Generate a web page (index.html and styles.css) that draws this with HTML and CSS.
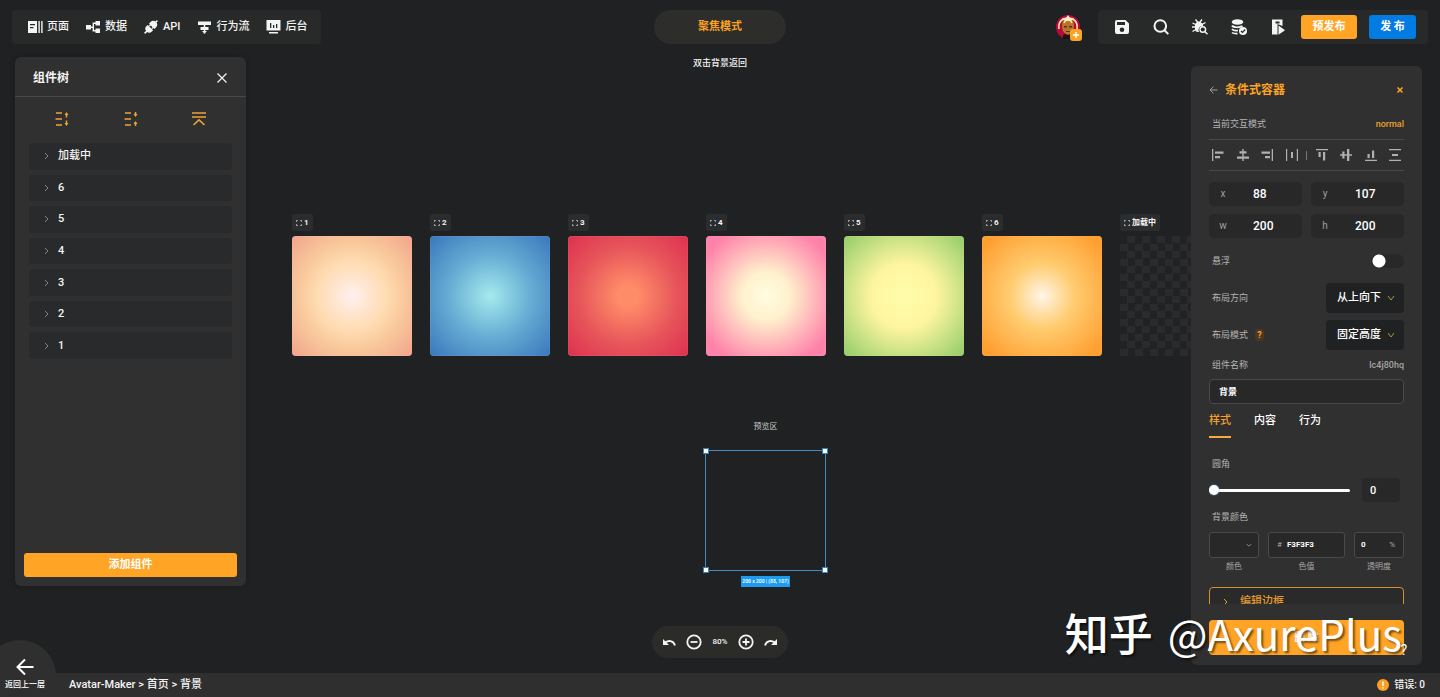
FILE: index.html
```html
<!DOCTYPE html>
<html lang="zh-CN">
<head>
<meta charset="utf-8">
<meta name="viewport" content="width=device-width, initial-scale=1">
<title>Avatar-Maker</title>
<link rel="stylesheet" href="styles.css">
</head>
<body>
<header class="topbar">
  <nav class="nav">
    <a href="#" class="nav-item"><svg class="nav-icon" viewBox="0 0 15 14"><path fill="currentColor" fill-rule="evenodd" d="M0 1h9v12H0zM2 4v1.300h5V4zM2 7v1.300h3.500V7zM10.400 1h1.400v12h-1.400zM13.200 1h1.400v12h-1.400z"/></svg>页面</a>
    <a href="#" class="nav-item"><svg class="nav-icon" viewBox="0 0 15 14"><path fill="currentColor" d="M0 5h5v4.500H0zM9.500 1H14v4.500H9.500zM9.500 8.500H14V13H9.500z"/><path fill="none" stroke="currentColor" stroke-width="1.400" d="M5 7.200h2.300M10 3.200H7.300v7.600H10"/></svg>数据</a>
    <a href="#" class="nav-item"><svg class="nav-icon" viewBox="0 0 15 14"><g fill="currentColor" transform="rotate(-45 7 7)"><path d="M6.200 3.200v7.600H4.500a3.800 3.800 0 0 1 0-7.600zM8 3.200h2.200a3.800 3.800 0 0 1 0 7.600H8V9.500H6.500V8.200H8V5.800H6.500V4.500H8z"/><path d="M-2 6.200h3.500v1.600H-2zM13 6.200h3v1.600h-3z"/></g></svg>API</a>
    <a href="#" class="nav-item"><svg class="nav-icon" viewBox="0 0 15 14"><path fill="currentColor" d="M1 1.500h13V5H1zM3.500 7h8v3h-8zM6.700 5h1.600v2H6.700zM6.700 10h1.600v3.500H6.700z"/><path fill="currentColor" d="M5 11h5l-2.500 2.500z"/></svg>行为流</a>
    <a href="#" class="nav-item"><svg class="nav-icon" viewBox="0 0 15 14"><path fill="currentColor" fill-rule="evenodd" d="M.500 0h14v10.500H.500zM4 3v5h1.300V3zM7 5v3h1.300V5zM10 4v4h1.300V4zM3 12h9v1.500H3z"/></svg>后台</a>
  </nav>
  <button class="mode">聚焦模式</button>
  <div class="top-right">
    <button class="avatar" aria-label="账户">
      <svg viewBox="0 0 24 24"><circle cx="12" cy="12" r="12" fill="#b50a3a"/><path fill="#1b1416" d="M7 24v-4l5-2 5 2v4z"/><path fill="#b87524" d="M6 10c0-5 3-7 6-7s6 2 6 7-1 8-6 10C7 18 6 15 6 10z"/><path fill="none" stroke="#f5e4b4" stroke-width="1.600" d="M3 14c-1-7 3-11 9-11s10 4 9 11M8 8c1-2 2-3 4-5 2 2 3 3 4 5"/><path fill="#f8edc9" d="m12 0 2 3h4l-3 3H9L6 3h4z"/><path fill="#5c2c17" d="M8 11h3v1.500H8zM13 11h3v1.500h-3zM10 16h4v1h-4z"/></svg>
      <span class="avatar-badge"><svg viewBox="0 0 12 12"><path stroke="#fff" stroke-width="1.600" d="M6 3v6M3 6h6"/></svg></span>
    </button>
    <div class="tools">
      <button class="tool" aria-label="保存"><svg viewBox="0 0 16 16"><path fill="currentColor" fill-rule="evenodd" d="M3 1h8.500L15 4.500V13a2 2 0 0 1-2 2H3a2 2 0 0 1-2-2V3a2 2 0 0 1 2-2zM3 3v3h8V3zM8 8.500a2.300 2.300 0 1 0 0 4.600 2.300 2.300 0 0 0 0-4.600z"/></svg></button>
      <button class="tool" aria-label="搜索"><svg viewBox="0 0 16 16"><g fill="none" stroke="currentColor" stroke-width="2"><circle cx="7.300" cy="7" r="5.800"/><path d="m11.500 11.300 3.800 3.800"/></g></svg></button>
      <button class="tool" aria-label="调试"><svg viewBox="0 0 16 16"><path fill="currentColor" d="M4.500 3.500C5 2 8.500 2 9 3.500L11 5v2a4 4 0 0 0-4 6c-2.500.500-4-1-4-3V5z"/><path stroke="currentColor" stroke-width="1.300" d="M3.500.500 5.500 3M10 .500 8 3M.500 4l3 1.500M0 8h3.500M.500 12.500 4 10.500M13.500 3.500 10 5.500"/><g fill="none" stroke="currentColor" stroke-width="1.400"><circle cx="10.800" cy="10.500" r="2.800"/><path d="m13 12.700 2.500 2.500"/></g></svg></button>
      <button class="tool" aria-label="数据库"><svg viewBox="0 0 16 16"><ellipse cx="6.500" cy="3" rx="5.800" ry="2.800" fill="currentColor"/><path fill="none" stroke="currentColor" stroke-width="1.700" d="M1 6.500c1 2 7 2.500 10.500.500M1 10c1 1.500 3 1.800 6 1.500M1 13.500c1 1 3 1.300 5.500 1.200"/><circle cx="12" cy="12" r="4" fill="currentColor"/><path fill="none" stroke="#282a2a" stroke-width="1.200" d="m10 12 1.500 1.500 2.700-3"/></svg></button>
      <button class="tool" aria-label="运行"><svg viewBox="0 0 16 16"><path fill="currentColor" fill-rule="evenodd" d="M2 .500h10.500V7L7.500 5v10.500H2zM5.500 2.500v2h4v-2z"/><path fill="currentColor" d="m8.500 6.500 6.500 4.700-6.500 4.600z"/></svg></button>
      <button class="publish publish-pre">预发布</button>
      <button class="publish publish-live">发 布</button>
    </div>
  </div>
</header>

<main class="workspace">
  <aside class="tree">
    <div class="tree-head">
      <h2 class="tree-title">组件树</h2>
      <button class="close" aria-label="关闭"><svg viewBox="0 0 12 12"><path stroke="currentColor" stroke-width="1.200" d="m1.500 1.500 9 9m0-9-9 9"/></svg></button>
    </div>
    <div class="tree-tools">
      <button class="tree-tool" aria-label="展开"><svg viewBox="0 0 16 16"><path fill="none" stroke="currentColor" stroke-width="1.500" d="M2 2h6M1.500 8H8M2 14h6M12.500 3v3.500M12.500 9.500V13"/><path fill="currentColor" d="m12.500 1 2 3h-4zM12.500 15l2-3h-4z"/></svg></button>
      <button class="tree-tool" aria-label="收起"><svg viewBox="0 0 16 16"><path fill="none" stroke="currentColor" stroke-width="1.500" d="M2 2h6M1.500 8H8M2 14h6M12.500 1v3.500M12.500 11.500V15"/><path fill="currentColor" d="m12.500 6 2-3h-4zM12.500 10l2 3h-4z"/></svg></button>
      <button class="tree-tool" aria-label="置顶"><svg viewBox="0 0 16 16"><path fill="none" stroke="currentColor" stroke-width="1.600" d="M1 2h14M1 6h14M2.500 14 8 8.800l5.500 5.200"/></svg></button>
    </div>
    <ul class="tree-list">
      <li><button class="tree-row"><svg class="chev" viewBox="0 0 6 8"><path d="m1 1 3 3-3 3"/></svg>加载中</button></li>
      <li><button class="tree-row"><svg class="chev" viewBox="0 0 6 8"><path d="m1 1 3 3-3 3"/></svg>6</button></li>
      <li><button class="tree-row"><svg class="chev" viewBox="0 0 6 8"><path d="m1 1 3 3-3 3"/></svg>5</button></li>
      <li><button class="tree-row"><svg class="chev" viewBox="0 0 6 8"><path d="m1 1 3 3-3 3"/></svg>4</button></li>
      <li><button class="tree-row"><svg class="chev" viewBox="0 0 6 8"><path d="m1 1 3 3-3 3"/></svg>3</button></li>
      <li><button class="tree-row"><svg class="chev" viewBox="0 0 6 8"><path d="m1 1 3 3-3 3"/></svg>2</button></li>
      <li><button class="tree-row"><svg class="chev" viewBox="0 0 6 8"><path d="m1 1 3 3-3 3"/></svg>1</button></li>
    </ul>
    <button class="add">添加组件</button>
  </aside>

  <section class="canvas">
    <p class="hint">双击背景返回</p>
    <div class="boards">
      <figure class="board"><figcaption class="tag"><svg viewBox="0 0 8 8"><path d="M.500 2.500v-2h2M5.500.500h2v2M7.500 5.500v2h-2M2.500 7.500h-2v-2"/></svg>1</figcaption><div class="swatch peach"></div></figure>
      <figure class="board"><figcaption class="tag"><svg viewBox="0 0 8 8"><path d="M.500 2.500v-2h2M5.500.500h2v2M7.500 5.500v2h-2M2.500 7.500h-2v-2"/></svg>2</figcaption><div class="swatch blue"></div></figure>
      <figure class="board"><figcaption class="tag"><svg viewBox="0 0 8 8"><path d="M.500 2.500v-2h2M5.500.500h2v2M7.500 5.500v2h-2M2.500 7.500h-2v-2"/></svg>3</figcaption><div class="swatch red"></div></figure>
      <figure class="board"><figcaption class="tag"><svg viewBox="0 0 8 8"><path d="M.500 2.500v-2h2M5.500.500h2v2M7.500 5.500v2h-2M2.500 7.500h-2v-2"/></svg>4</figcaption><div class="swatch pink"></div></figure>
      <figure class="board"><figcaption class="tag"><svg viewBox="0 0 8 8"><path d="M.500 2.500v-2h2M5.500.500h2v2M7.500 5.500v2h-2M2.500 7.500h-2v-2"/></svg>5</figcaption><div class="swatch green"></div></figure>
      <figure class="board"><figcaption class="tag"><svg viewBox="0 0 8 8"><path d="M.500 2.500v-2h2M5.500.500h2v2M7.500 5.500v2h-2M2.500 7.500h-2v-2"/></svg>6</figcaption><div class="swatch orange"></div></figure>
      <figure class="board"><figcaption class="tag"><svg viewBox="0 0 8 8"><path d="M.500 2.500v-2h2M5.500.500h2v2M7.500 5.500v2h-2M2.500 7.500h-2v-2"/></svg>加载中</figcaption><div class="swatch checker"></div></figure>
    </div>
    <div class="preview">
      <span class="preview-name">预览区</span>
      <div class="selection"><i class="grip tl"></i><i class="grip tr"></i><i class="grip bl"></i><i class="grip br"></i></div>
      <span class="size-tag">200 x 200 | (88, 107)</span>
    </div>
    <div class="zoombar">
      <button class="zoom-btn" aria-label="撤销"><svg viewBox="0 0 16 16"><path fill="none" stroke="currentColor" stroke-width="1.800" d="M14 11.500C12.500 6.500 7 5.500 3 9.500"/><path fill="currentColor" d="M2 5v6h6z"/></svg></button>
      <button class="zoom-btn" aria-label="缩小"><svg viewBox="0 0 16 16"><g fill="none" stroke="currentColor" stroke-width="1.800"><circle cx="8" cy="8" r="6.700"/><path d="M4.500 8h7"/></g></svg></button>
      <span class="zoom-value">80%</span>
      <button class="zoom-btn" aria-label="放大"><svg viewBox="0 0 16 16"><g fill="none" stroke="currentColor" stroke-width="1.800"><circle cx="8" cy="8" r="6.700"/><path d="M4.500 8h7M8 4.500v7"/></g></svg></button>
      <button class="zoom-btn" aria-label="重做"><svg viewBox="0 0 16 16"><path fill="none" stroke="currentColor" stroke-width="1.800" d="M2 11.500C3.500 6.500 9 5.500 13 9.500"/><path fill="currentColor" d="M14 5v6H8z"/></svg></button>
    </div>
  </section>

  <aside class="props">
    <div class="props-head">
      <button class="back-small" aria-label="返回"><svg viewBox="0 0 10 10"><path d="M9.500 5H1.500M5 1.200 1.200 5 5 8.800"/></svg></button>
      <h2 class="props-title">条件式容器</h2>
      <button class="props-close" aria-label="关闭"><svg viewBox="0 0 8 8"><path stroke="currentColor" stroke-width="1.600" d="m1.500 1.500 5 5m0-5-5 5"/></svg></button>
    </div>
    <div class="props-body">
      <div class="line mode-line"><span>当前交互模式</span><span class="accent">normal</span></div>
      <div class="aligns">
        <button class="align" aria-label="左对齐"><svg viewBox="0 0 12 12"><path d="M0 0h1.300v12H0zM3 2.500h8.500v2.200H3zM3 7h5v2.200H3z"/></svg></button>
        <button class="align" aria-label="水平居中"><svg viewBox="0 0 12 12"><path d="M5.300 0h1.400v12H5.300zM2.500 2.300h7v2.200h-7zM0 7.500h12v2.300H0z"/></svg></button>
        <button class="align" aria-label="右对齐"><svg viewBox="0 0 12 12"><path d="M10.700 0H12v12h-1.300zM.500 2.500H9v2.200H.500zM4 7h5v2.200H4z"/></svg></button>
        <button class="align" aria-label="水平分布"><svg viewBox="0 0 12 12"><path d="M0 0h1.200v12H0zM10.800 0H12v12h-1.200zM5 3h2v6H5z"/></svg></button>
        <span class="align-sep"></span>
        <button class="align" aria-label="顶对齐"><svg viewBox="0 0 12 12"><path d="M0 0h12v1.300H0zM2.500 3h2.200v5H2.500zM7 3h2.200v8.500H7z"/></svg></button>
        <button class="align" aria-label="垂直居中"><svg viewBox="0 0 12 12"><path d="M0 5.300h12v1.400H0zM2.300 2.500h2.200v7H2.300zM7 0h2.300v12H7z"/></svg></button>
        <button class="align" aria-label="底对齐"><svg viewBox="0 0 12 12"><path d="M0 10.700h12V12H0zM2.500 5h2.200v4H2.500zM7 1.500h2.200V9H7z"/></svg></button>
        <button class="align" aria-label="垂直分布"><svg viewBox="0 0 12 12"><path d="M0 0h12v1.300H0zM0 10.700h12V12H0zM3 5h6v2H3z"/></svg></button>
      </div>
      <div class="coords">
        <label class="coord"><span>x</span><input class="coord-center" type="text" value="88"></label>
        <label class="coord"><span>y</span><input type="text" value="107"></label>
        <label class="coord"><span>w</span><input type="text" value="200"></label>
        <label class="coord"><span>h</span><input type="text" value="200"></label>
      </div>
      <div class="line float-line"><label for="float">悬浮</label><input class="switch" type="checkbox" id="float"></div>
      <div class="line select-line"><label for="dir">布局方向</label><span class="select-box"><select id="dir"><option>从上向下</option></select><svg viewBox="0 0 8 6"><path d="m1 1 3 4 3-4"/></svg></span></div>
      <div class="line select-line"><span class="with-help"><label for="fit">布局模式</label><b class="help">?</b></span><span class="select-box"><select id="fit"><option>固定高度</option></select><svg viewBox="0 0 8 6"><path d="m1 1 3 4 3-4"/></svg></span></div>
      <div class="line name-line"><label for="name">组件名称</label><span class="code">lc4j80hq</span></div>
      <input class="name" id="name" type="text" value="背景">
      <div class="tabs"><button class="tab active">样式</button><button class="tab">内容</button><button class="tab">行为</button></div>
      <div class="line radius-label"><label for="radius">圆角</label></div>
      <div class="radius"><input class="range" id="radius" type="range" min="0" max="100" value="0"><input class="radius-value" type="text" value="0" aria-label="圆角值"></div>
      <div class="line color-label"><span>背景颜色</span></div>
      <div class="colors">
        <div class="color-col"><button class="field field-pick" id="pick"><svg viewBox="0 0 8 6"><path d="m1 1 3 3 3-3"/></svg></button><label for="pick">颜色</label></div>
        <div class="color-col wide"><span class="field"><i>#</i><input id="hex" type="text" value="F3F3F3"></span><label for="hex">色值</label></div>
        <div class="color-col"><span class="field field-alpha"><input id="alpha" type="text" value="0"><i>%</i></span><label for="alpha">透明度</label></div>
      </div>
      <button class="border-edit"><svg class="chev" viewBox="0 0 6 8"><path d="m1 1 3 3-3 3"/></svg>编辑边框</button>
    </div>
    <button class="delete">删 除</button>
    <button class="question" aria-label="帮助">?</button>
  </aside>
</main>

<footer class="status">
  <button class="back"><svg viewBox="0 0 18 18"><path d="M17.500 9H2M9 1.500 1.500 9 9 16.500"/></svg>返回上一层</button>
  <span class="crumbs">Avatar-Maker &gt; 首页 &gt; 背景</span>
  <span class="errors"><svg viewBox="0 0 12 12"><circle cx="6" cy="6" r="6" fill="#fb9f22"/><path stroke="#fff" stroke-width="1.400" d="M6 2.500v4.500M6 8.200v1.500"/></svg>错误: 0</span>
</footer>
<div class="watermark"><span class="watermark-site">知乎</span><span>@AxurePlus</span></div>
</body>
</html>
```

FILE: styles.css
```css
* { box-sizing: border-box; }
body {
  margin: 0;
  height: 100vh;
  display: flex;
  flex-direction: column;
  position: relative;
  overflow: hidden;
  background: #1f2122;
  color: #f4f4f4;
  font: 500 11px/16px Roboto, "Noto Sans CJK SC", sans-serif;
}
button, input, select { font: inherit; color: inherit; border: 0; padding: 0; margin: 0; background: none; min-width: 0; }
button { display: flex; align-items: center; justify-content: center; cursor: pointer; }
a { color: inherit; text-decoration: none; }
h2, p, figure, ul { margin: 0; padding: 0; list-style: none; }
svg { display: block; flex: none; }
i { font-style: normal; }

.topbar { display: grid; grid-template-columns: 1fr auto 1fr; align-items: start; padding: 10px 12px 0; }
.nav { justify-self: start; display: flex; align-items: center; gap: 17px; height: 34px; padding: 0 14px 0 16px; background: #282a2a; border-radius: 4px; }
.nav-item { display: flex; align-items: center; gap: 4px; white-space: nowrap; }
.nav-icon { width: 15px; height: 14px; }
.mode { width: 132px; height: 34px; border-radius: 17px; background: #2d2d2c; color: #f9a126; font-weight: 700; }
.top-right { justify-self: end; display: flex; align-items: center; gap: 18px; }
.avatar { position: relative; width: 24px; height: 24px; }
.avatar svg { width: 100%; height: 100%; }
.avatar-badge { position: absolute; right: -2px; bottom: -2px; width: 12px; height: 12px; border-radius: 3px; background: #fda423; }
.tools { display: flex; align-items: center; height: 34px; padding: 0 12px 0 16px; gap: 23px; background: #282a2a; border-radius: 4px; }
.tool, .tool svg { width: 16px; height: 16px; }
.publish { height: 24px; border-radius: 3px; color: #fff; font-weight: 700; }
.publish-pre { width: 56px; margin-left: -8px; background: #ffa424; }
.publish-live { width: 47px; margin-left: -11px; background: #027be3; }

.workspace { flex: 1; min-height: 0; display: flex; }
.tree { flex: none; width: 231px; margin: 13px 3px 87px 15px; display: flex; flex-direction: column; background: #303030; border-radius: 6px; box-shadow: 0 0 4px #191b1b; }
.tree-head { display: flex; align-items: center; justify-content: space-between; height: 40px; padding: 2px 18px 0; border-bottom: 1px solid #484848; }
.tree-title { font-size: 12px; font-weight: 700; }
.close svg { width: 12px; height: 12px; }
.tree-tools { display: flex; justify-content: space-between; padding: 14px 39px; }
.tree-tool svg { width: 16px; height: 16px; }
.tree-tool { color: #eda436; }
.tree-list { display: grid; grid-auto-rows: 1fr; gap: 5px; height: 216px; margin: 2px 14px 0; }
.tree-row { width: 100%; height: 100%; justify-content: flex-start; gap: 8px; padding-left: 15px; border-radius: 4px; background: #292a2b; }
.chev { width: 6px; height: 8px; }
.chev path { fill: none; stroke: #858585; stroke-width: 1; }
.add { height: 24px; margin: auto 9px 9px; border-radius: 3px; background: #ffa424; color: #fff; font-weight: 700; }

.canvas { flex: 1; min-width: 0; position: relative; overflow: hidden; }
.hint { padding-top: 11px; text-align: center; font-size: 9px; }
.boards { position: absolute; left: 43px; top: 170px; display: flex; gap: 18px; }
.board { width: 120px; display: flex; flex-direction: column; align-items: flex-start; gap: 5px; }
.tag { display: flex; align-items: center; gap: 2px; height: 17px; padding: 0 4px; font-size: 8px; font-weight: 700; background: #2b2c2d; border-radius: 2px; }
.tag svg { width: 6px; height: 6px; }
.tag path { fill: none; stroke: #ddd; stroke-width: 1; }
.swatch { width: 120px; height: 120px; border-radius: 4px; box-shadow: inset 0 0 1px #ffffff88; }
.peach { background: radial-gradient(circle, #fff0f0, #ffdbb0 42%, #f8c69a 65%, #f2a38c); }
.blue { background: radial-gradient(circle, #a5eaed, #65abd3 50%, #3a76bc); }
.red { background: radial-gradient(circle, #ff8c69 12%, #e7555a 58%, #de3050); }
.pink { background: radial-gradient(circle, #fffde0, #fff1cd 28%, #ff82aa 85%); }
.green { background: radial-gradient(circle, #fffba8 10%, #fff5a0 38%, #92cc68); }
.orange { background: radial-gradient(circle, #fff5e8, #ffcc70 38%, #ff9f30 90%); }
.checker { border-radius: 0; box-shadow: none; background: repeating-conic-gradient(#2a2b2c 0 25%, #202223 0 50%) 0 0 / 15px 15px; }
.preview { position: absolute; left: 456px; top: 375px; width: 121px; display: flex; flex-direction: column; align-items: center; }
.preview-name { font-size: 8px; font-weight: 400; color: #c8c8c8; }
.selection { position: relative; width: 121px; height: 121px; margin: 15px 0 5px; border: 1px solid #4389bb; }
.grip { position: absolute; width: 4px; height: 4px; background: #fff; outline: 1px solid #3685be; }
.tl { left: -2px; top: -2px; }
.tr { right: -2px; top: -2px; }
.bl { left: -2px; bottom: -2px; }
.br { right: -2px; bottom: -2px; }
.size-tag { width: 49px; height: 11px; background: #1c9cf0; color: #e8f5ff; font-size: 5px; line-height: 11px; font-weight: 700; text-align: center; white-space: nowrap; }
.zoombar { position: absolute; left: 50%; bottom: 15px; transform: translateX(-50%); display: flex; align-items: center; gap: 9px; height: 32px; padding: 0 9px; border-radius: 16px; background: #2b2b2a; }
.zoom-btn svg { width: 16px; height: 16px; }
.zoom-value { width: 18px; text-align: center; font-size: 8px; }

.props { position: relative; flex: none; width: 231px; margin: 22px 18px 8px 0; padding: 0 18px 10px; display: flex; flex-direction: column; background: #303030; border-radius: 6px; font-weight: 400; }
.props-head { display: flex; align-items: center; gap: 7px; height: 48px; flex: none; }
.back-small { color: #aaa; }
.back-small svg { width: 9px; height: 10px; }
.back-small path, .back path { fill: none; stroke: currentColor; }
.props-title { color: #fba325; font-size: 12px; font-weight: 700; }
.props-close { margin-left: auto; color: #fba325; }
.props-close svg { width: 8px; height: 8px; }
.props-body { flex: 1; min-height: 0; overflow: hidden; }
.line { display: flex; align-items: center; justify-content: space-between; padding-left: 3px; font-size: 9px; color: #b4b4b4; }
.accent { color: #eda02c; font-weight: 500; }
.code { font-weight: 500; color: #a4a4a4; }
.mode-line { height: 25px; padding-bottom: 5px; }
.aligns { display: flex; align-items: center; justify-content: space-between; height: 32px; padding: 0 3px; border: solid #484848; border-width: 1px 0; }
.align svg { width: 12px; height: 12px; fill: #b0b0b0; }
.align-sep { width: 1px; height: 9px; margin: 0 -4px; background: #777; }
.coords { display: grid; grid-template-columns: 1fr 1fr; gap: 8px 9px; padding: 11px 0; }
.coord { display: grid; grid-template-columns: 28px 1fr; align-items: center; height: 24px; border-radius: 5px; background: #282828; color: #a0a0a0; font-size: 10px; text-align: center; }
.coord input { width: 100%; padding-left: 16px; color: #fff; font-size: 12px; font-weight: 500; }
.float-line { height: 23px; }
.switch { appearance: none; width: 33px; height: 14px; border-radius: 7px; background: radial-gradient(circle at 8px 7px, #fff 6px, transparent 7px) #282828; }
.select-line { height: 30px; margin-top: 11px; }
.select-line + .select-line { margin-top: 7px; }
.with-help { display: flex; gap: 7px; align-items: center; }
.help { width: 9px; height: 12px; border-radius: 4px; background: #4a3822; color: #f6a329; line-height: 12px; text-align: center; }
.select-box { position: relative; width: 78px; height: 30px; border-radius: 4px; background: #1f2122; }
.select-box select { appearance: none; width: 100%; height: 100%; padding-left: 11px; color: #fff; font-size: 11px; font-weight: 500; }
.select-box svg { position: absolute; right: 9px; top: 12px; width: 8px; height: 6px; pointer-events: none; }
.select-box path { fill: none; stroke: #a69b32; stroke-width: 1; }
.name-line { height: 29px; }
.name { display: block; width: 100%; height: 25px; padding: 0 9px; border: 1px solid #4a4a4a; border-radius: 4px; background: #282828; color: #fff; font-size: 9px; font-weight: 700; }
.tabs { display: flex; gap: 23px; padding-top: 9px; }
.tab { height: 25px; align-items: flex-start; border-bottom: 2px solid transparent; color: #fff; font-weight: 500; }
.active { color: #f6a12a; border-color: #f9a83a; }
.radius-label { height: 16px; margin-top: 18px; }
.radius { display: flex; align-items: center; gap: 12px; height: 24px; margin-top: 6px; padding-right: 4px; }
.range { appearance: none; flex: 1; height: 10px; }
.range::-webkit-slider-runnable-track { height: 3px; border-radius: 2px; background: #fff; }
.range::-webkit-slider-thumb { appearance: none; width: 10px; height: 10px; margin-top: -4px; border-radius: 50%; background: #fff; box-shadow: 0 0 2px #41b0f0; }
.radius-value { width: 38px; height: 24px; padding-left: 8px; border-radius: 4px; background: #282828; color: #fff; font-weight: 500; }
.color-label { height: 16px; margin: 7px 0; }
.colors { display: flex; gap: 9px; }
.color-col { width: 50px; display: flex; flex-direction: column; align-items: center; gap: 1px; color: #a8a8a8; font-size: 8px; }
.wide { flex: 1; }
.field { width: 100%; height: 26px; display: flex; align-items: center; gap: 5px; padding: 0 8px; border: 1px solid #4a4a4a; border-radius: 3px; background: #282828; }
.field input { width: 100%; color: #fff; font-size: 8px; font-weight: 700; }
.field-pick { justify-content: flex-end; padding-right: 6px; }
.field-alpha { padding-left: 6px; }
.field svg { width: 6px; height: 5px; }
.field path { fill: none; stroke: #aaa; stroke-width: 1; }
.border-edit { width: 100%; height: 30px; margin-top: 12px; justify-content: flex-start; gap: 11px; padding: 0 13px; border: 1px solid #d5902d; border-radius: 4px; color: #e69b2c; font-weight: 500; background: #2a2a2a; }
.border-edit path { stroke: #e69b2c; }
.delete { flex: none; height: 35px; margin-top: 16px; border-radius: 4px; background: #ffa424; color: #fff; font-weight: 700; }
.question { position: absolute; right: 15px; bottom: 7px; font-size: 14px; color: #fff; z-index: 1; }

.status { position: relative; flex: none; display: flex; align-items: center; justify-content: space-between; height: 24px; padding: 0 15px 0 69px; background: #2f2f2f; }
.back { position: absolute; left: -16px; bottom: -15px; width: 72px; height: 72px; padding: 0 0 2px 10px; flex-direction: column; gap: 1px; border-radius: 50%; background: #2f2f2f; font-size: 8px; color: #fff; }
.back svg { width: 18px; height: 18px; }
.back path { stroke-width: 2; }
.errors { display: flex; align-items: center; gap: 5px; font-size: 10px; }
.errors svg { width: 12px; height: 12px; }
.watermark { position: absolute; right: 38px; bottom: 32px; display: flex; align-items: baseline; gap: 15px; color: #fff; font: 400 42px/64px "Noto Sans CJK SC", sans-serif; text-shadow: 2px 2px 2px #0008; white-space: nowrap; pointer-events: none; }
.watermark-site { font-size: 44px; font-weight: 500; }
```
